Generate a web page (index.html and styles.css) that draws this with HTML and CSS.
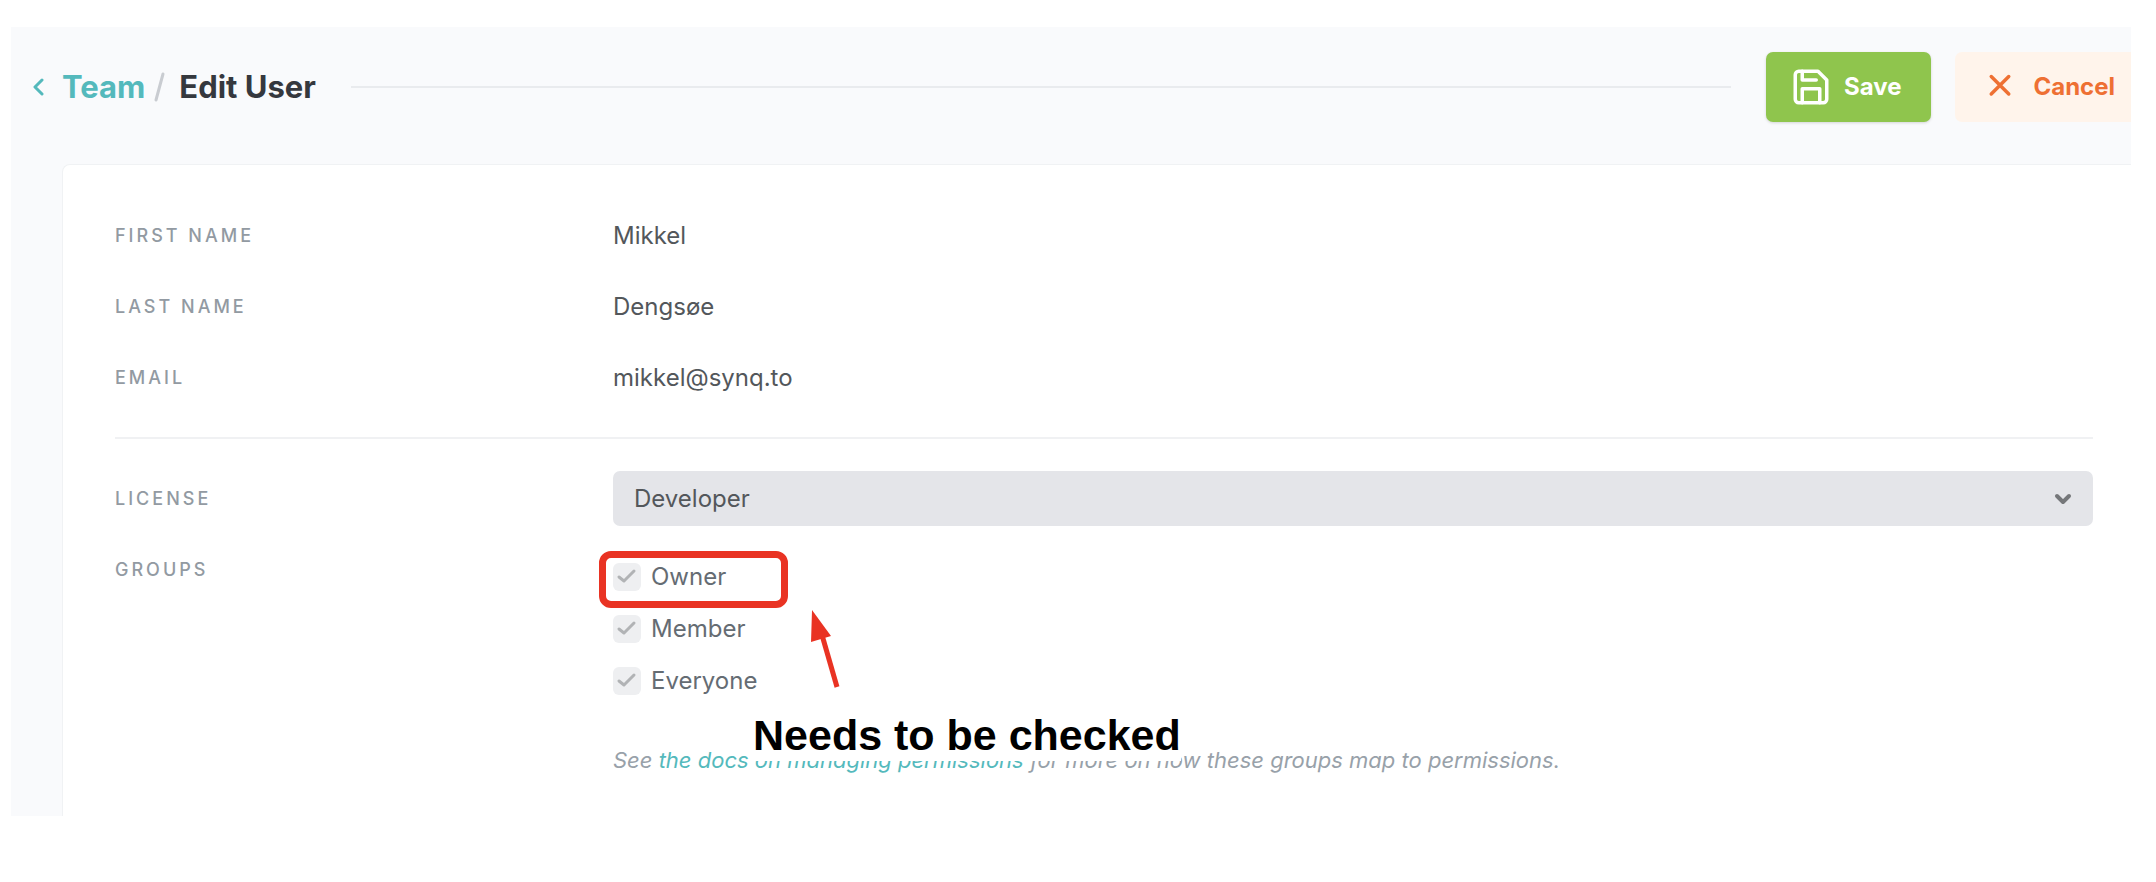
FILE: index.html
```html
<!DOCTYPE html>
<html lang="en">
<head>
    <meta charset="UTF-8">
    <meta name="viewport" content="width=device-width, initial-scale=1.0">
    <title>Edit User</title>
    <link rel="stylesheet" href="styles.css">
</head>
<body>
    <main class="page">
        <header class="header">
            <a class="back" href="#team">
                <svg class="back-icon" viewBox="0 0 12 20" aria-hidden="true"><path d="M10 3L3 10l7 7"/></svg>
                Team
            </a>
            <svg class="slash" viewBox="0 0 12 32" aria-hidden="true"><path d="M10 3L3 29"/></svg>
            <h1 class="title">Edit User</h1>
            <div class="header-line"></div>
            <button type="submit" form="userForm" class="btn btn-save">
                <svg class="btn-icon" viewBox="0 0 24 24" aria-hidden="true">
                    <path d="M19 21H5a2 2 0 0 1-2-2V5a2 2 0 0 1 2-2h11l5 5v11a2 2 0 0 1-2 2z"/>
                    <path d="M17 21v-8H7v8M7 3v5h8"/>
                </svg>
                Save
            </button>
            <button type="button" class="btn btn-cancel">
                <svg class="btn-icon" viewBox="0 0 24 24" aria-hidden="true"><path d="M7 6l10 10M17 6L7 16"/></svg>
                Cancel
            </button>
        </header>

        <form id="userForm" class="card">
            <dl class="details">
                <div class="row">
                    <dt class="label">First name</dt>
                    <dd class="value">Mikkel</dd>
                </div>
                <div class="row">
                    <dt class="label">Last name</dt>
                    <dd class="value">Dengsøe</dd>
                </div>
                <div class="row">
                    <dt class="label">Email</dt>
                    <dd class="value">mikkel@synq.to</dd>
                </div>
            </dl>

            <hr class="divider">

            <div class="row">
                <label class="label" for="license">License</label>
                <div class="select">
                    <select id="license" name="license" disabled>
                        <option>Developer</option>
                    </select>
                    <svg class="select-icon" viewBox="0 0 18 12" aria-hidden="true"><path d="M3 3l6 6 6-6"/></svg>
                </div>
            </div>

            <div class="row">
                <div class="label" id="groupsLabel">Groups</div>
                <div class="groups" role="group" aria-labelledby="groupsLabel">
                    <label class="check">
                        <input type="checkbox" name="owner" checked disabled>
                        <svg class="check-icon" viewBox="0 0 28 28" aria-hidden="true"><path d="M6 14l5 4L21 8"/></svg>
                        <span>Owner</span>
                    </label>
                    <label class="check">
                        <input type="checkbox" name="member" checked disabled>
                        <svg class="check-icon" viewBox="0 0 28 28" aria-hidden="true"><path d="M6 14l5 4L21 8"/></svg>
                        <span>Member</span>
                    </label>
                    <label class="check">
                        <input type="checkbox" name="everyone" checked disabled>
                        <svg class="check-icon" viewBox="0 0 28 28" aria-hidden="true"><path d="M6 14l5 4L21 8"/></svg>
                        <span>Everyone</span>
                    </label>
                    <p class="help">See <a href="#docs">the docs on managing permissions</a> for more on how these groups map to permissions.</p>

                    <!-- callout over the owner group -->
                    <div class="callout-box"></div>
                    <svg class="callout-arrow" viewBox="0 0 32 80" aria-hidden="true">
                        <path class="arrow-line" d="M13 26l15 52"/>
                        <path class="arrow-head" d="M3 1l19 26-20 6z"/>
                    </svg>
                    <div class="callout-text">Needs to be checked</div>
                </div>
            </div>
        </form>
    </main>
</body>
</html>
```

FILE: styles.css
```css
* { box-sizing: border-box; }
body { margin: 0; padding: 27px 25px 0 11px; background: #fff; color: #53575b; font-family: Inter, "Liberation Sans", sans-serif; font-size: 24px; line-height: 36px; }
svg { flex: none; fill: none; stroke: currentColor; stroke-linecap: round; stroke-linejoin: round; }

.page { background: #f9fafc; overflow: hidden; }

/* header */
.header { display: flex; align-items: center; height: 137px; margin-right: -14px; padding-left: 21px; padding-bottom: 17px; }
.back { display: flex; align-items: center; gap: 18px; color: #54b9bc; font-size: 31px; font-weight: 700; text-decoration: none; }
.back-icon { width: 12px; height: 20px; stroke-width: 3; }
.slash { width: 12px; height: 32px; margin: 0 14px 0 8px; color: #c9ccd1; stroke-width: 3; }
.title { margin: 0; color: #35383e; font-size: 31px; font-weight: 700; }
.header-line { flex: 1; height: 2px; margin: 0 35px; background: #e9ebee; }
.btn { display: flex; align-items: center; gap: 12px; height: 70px; padding: 0 30px 0 24px; border: none; border-radius: 7px; font: inherit; font-weight: 700; cursor: pointer; }
.btn-icon { width: 42px; height: 42px; stroke-width: 2; }
.btn-save { margin-right: 24px; background: #8fc54d; color: #fff; box-shadow: 0 1px 3px rgba(0, 0, 0, 0.15); }
.btn-cancel { background: #fff4eb; color: #ee7033; }

/* card */
.card { margin-left: 51px; padding: 35px 38px 38px 52px; background: #fff; border: 1px solid #f0f2f4; border-right: none; border-bottom: none; border-top-left-radius: 8px; }
.details { margin: 0; }
.row { display: grid; grid-template-columns: 498px 1fr; line-height: 71px; }
.label { color: #929aa2; font-size: 18px; font-weight: 500; letter-spacing: 3px; text-transform: uppercase; }
.value { margin: 0; }
.divider { height: 2px; margin: 24px 0; border: none; background: #f0f1f3; }

.select { display: grid; align-items: center; }
.select select { grid-area: 1 / 1; width: 100%; height: 55px; padding: 0 21px; border: none; border-radius: 7px; background: #e4e5e9; color: #53575b; font: inherit; line-height: 55px; opacity: 1; appearance: none; }
.select-icon { grid-area: 1 / 1; justify-self: end; width: 18px; height: 12px; margin-right: 21px; color: #75777a; stroke-width: 4; pointer-events: none; }

.groups { position: relative; padding-top: 17px; line-height: 36px; }
.check { display: grid; grid-template-columns: 28px 1fr; column-gap: 10px; align-items: center; height: 52px; color: #656c73; }
.check input { grid-area: 1 / 1; width: 28px; height: 28px; margin: 0; border-radius: 6px; background: #eeeff1; appearance: none; }
.check-icon { grid-area: 1 / 1; width: 28px; height: 28px; color: #b1b3b5; stroke-width: 3; }
.help { margin: 35px 0 0; color: #98a1a9; font-size: 22px; font-style: italic; }
.help a { color: #54b9bc; text-decoration: none; }

/* callout */
.callout-box { position: absolute; top: 17px; left: -14px; width: 189px; height: 57px; border: 7px solid #e93323; border-radius: 12px; }
.callout-arrow { position: absolute; top: 75px; left: 196px; width: 32px; height: 80px; color: #e93323; }
.arrow-line { stroke-width: 5; stroke-linecap: butt; }
.arrow-head { fill: currentColor; stroke: none; }
.callout-text { position: absolute; top: 178px; left: 140px; padding-bottom: 3px; background: #fff; color: #000; font-family: "Liberation Sans", Arial, sans-serif; font-size: 43px; font-weight: 700; line-height: 46px; white-space: nowrap; }
```
